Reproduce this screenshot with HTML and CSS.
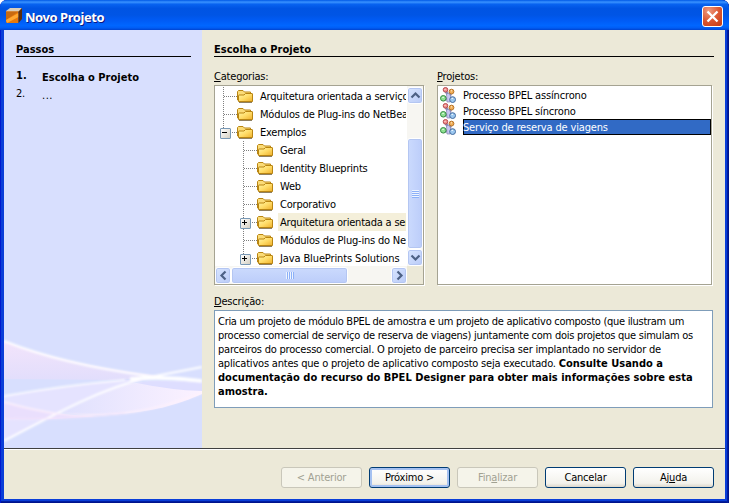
FILE: index.html
```
<!DOCTYPE html>
<html lang="pt-BR">
<head>
<meta charset="utf-8">
<title>Novo Projeto</title>
<link rel="stylesheet" href="styles.css">
</head>
<body>
<svg class="defs" width="0" height="0">
  <defs>
    <linearGradient id="fold" x1="0" y1="0" x2="1" y2="1"><stop offset="0" stop-color="#fff6a8"/><stop offset=".5" stop-color="#ffdc68"/><stop offset="1" stop-color="#eeb02c"/></linearGradient>
    <symbol id="folder" viewBox="0 0 16 16">
      <path d="M.5 12V3.500L1.500 2.500H6L7.500 4h6v8z" fill="#fbdc78" stroke="#b98512"/>
      <path d="M1.500 13.500V7.500q0-.5.5-.5H7L8.500 5.500h6.500q.5 0 .5.5V13.500z" fill="url(#fold)" stroke="#b98512"/>
      <path d="M2 14.500h13" fill="none" stroke="#5f4a20" stroke-opacity=".7"/>
    </symbol>
    <symbol id="process" viewBox="0 0 16 16">
      <path d="M5.500 4L9 9M11 5L8.500 12.500M4 12h8" stroke="#8a8bb5" stroke-width="2.800" fill="none"/>
      <path d="M6.500 7L9 6l2 4-1 5H7z" fill="#c8c6f2" stroke="#8585b0" stroke-width=".7"/>
      <circle cx="5.500" cy="2.800" r="2.300" fill="#f0908c" stroke="#b94a50"/>
      <circle cx="11.500" cy="4.600" r="2.400" fill="#f0ae58" stroke="#b97325"/>
      <circle cx="3.300" cy="11.300" r="2.800" fill="#8fe092" stroke="#368b45"/>
      <circle cx="12.600" cy="12.600" r="2.900" fill="#9cc8f0" stroke="#41699e"/>
      <path d="M4.500 2.500h1M11 3.800h1M2.300 10.500h1.500M11.500 11.500h1.500" stroke="#fff" stroke-opacity=".8"/>
    </symbol>
  </defs>
</svg>
<div class="window">
  <header class="titlebar">
    <svg class="app" width="16" height="16" viewBox="0 0 16 16"><path d="M0 3L4 0h12l-3 4H0z" fill="#d9cdb9"/><path d="M0 3.500h12.500V15H1L0 14z" fill="#e8780a"/><path d="M0 3.500h12.500L0 12z" fill="#c86a10"/><path d="M0 12L12.500 5v4L1 15z" fill="#ffa832"/><path d="M12.500 3.500L16 0v11l-3.500 4z" fill="#5b2c08"/></svg>
    <h1><span>Novo Projeto</span></h1>
    <button class="close" aria-label="Fechar"><svg width="21" height="21" viewBox="0 0 21 21"><path d="M5.500 5.500l10 10M15.500 5.500l-10 10" stroke="#fff" stroke-width="2.300"/></svg></button>
  </header>
  <main>
    <aside>
      <svg class="waves" width="198" height="150" viewBox="4 298 198 150">
        <defs>
          <linearGradient id="w1" x1="0" x2="0" y1="0" y2="1"><stop offset="0" stop-color="#f3e4fb"/><stop offset="1" stop-color="#e2defc"/></linearGradient>
          <linearGradient id="w2"><stop offset="0" stop-color="#dfe0fe"/><stop offset="1" stop-color="#fcf2ff"/></linearGradient>
          <filter id="soft" x="-5%" y="-5%" width="110%" height="110%"><feGaussianBlur stdDeviation=".9"/></filter>
        </defs>
        <path d="M4 341C54 360 105 369 160 376L120 380 4 379z" fill="url(#w1)"/>
        <path d="M4 396C50 388 90 383 125 380L148 379C95 391 50 418 4 441z" fill="#e5e3ff"/>
        <path d="M4 402C35 411 60 415 95 416C70 419 35 420 4 419z" fill="#eadffd"/>
        <path d="M125 384C155 381 180 381 202 381V394C165 410 140 413 100 415Q70 415 60 411C80 400 105 390 125 384z" fill="url(#w2)"/>
        <path d="M137 383Q170 390 202 391V381H150z" fill="#dedeff"/>
        <g fill="none" stroke="#fff" filter="url(#soft)">
          <path d="M4 341C54 361 105 370 150 376Q175 380 202 381" stroke-width="2"/>
          <path d="M4 396C50 388 90 383 125 380" stroke-width="1.500"/>
          <path d="M4 441C50 417 95 391 145 378L202 367" stroke-width="2"/>
          <path d="M4 402C45 413 70 418 115 414C150 411 175 403 202 393" stroke="#fff2fb" stroke-width="1.500"/>
          <path d="M4 419C70 420 105 415 125 413" stroke="#f8e7fb"/>
          <path d="M130 379Q165 376 202 381" stroke-width="3.500"/>
        </g>
      </svg>
      <h2 class="bold">Passos</h2>
      <ol>
        <li class="bold"><span class="num">1.</span><span class="step">Escolha o Projeto</span></li>
        <li><span class="num">2.</span><span class="step dots">...</span></li>
      </ol>
    </aside>
    <section class="content">
      <h2 class="bold">Escolha o Projeto</h2>
      <div class="lists">
        <div class="cat">
          <label><u>C</u>ategorias:</label>
          <div class="box tree">
            <div class="rows">
              <ul>
                <li class="row"><i class="guide"></i><svg class="ic"><use href="#folder"/></svg><span>Arquitetura orientada a serviços</span></li>
                <li class="row"><i class="guide"></i><svg class="ic"><use href="#folder"/></svg><span>Módulos de Plug-ins do NetBeans</span></li>
                <li class="row"><i class="guide end minus"></i><svg class="ic"><use href="#folder"/></svg><span>Exemplos</span></li>
              </ul>
              <ul class="nested">
                <li class="row"><i class="guide"></i><svg class="ic"><use href="#folder"/></svg><span>Geral</span></li>
                <li class="row"><i class="guide"></i><svg class="ic"><use href="#folder"/></svg><span>Identity Blueprints</span></li>
                <li class="row"><i class="guide"></i><svg class="ic"><use href="#folder"/></svg><span>Web</span></li>
                <li class="row"><i class="guide"></i><svg class="ic"><use href="#folder"/></svg><span>Corporativo</span></li>
                <li class="row"><i class="guide plus"></i><svg class="ic"><use href="#folder"/></svg><span class="soft">Arquitetura orientada a serviços</span></li>
                <li class="row"><i class="guide"></i><svg class="ic"><use href="#folder"/></svg><span>Módulos de Plug-ins do NetBeans</span></li>
                <li class="row"><i class="guide end plus"></i><svg class="ic"><use href="#folder"/></svg><span class="wide">Java BluePrints Solutions</span></li>
              </ul>
            </div>
            <div class="vbar">
              <b class="sb arrow"><svg width="15" height="15"><path d="M3.500 9.500l4-4 4 4"/></svg></b>
              <b class="sb vthumb"><i></i></b>
              <b class="sb arrow"><svg width="15" height="15"><path d="M3.500 5.500l4 4 4-4"/></svg></b>
            </div>
            <div class="hbar">
              <b class="sb arrow"><svg width="15" height="15"><path d="M9.500 3.500l-4 4 4 4"/></svg></b>
              <b class="sb hthumb"><i></i></b>
              <b class="sb arrow last"><svg width="15" height="15"><path d="M5.500 3.500l4 4-4 4"/></svg></b>
            </div>
          </div>
        </div>
        <div class="proj">
          <label><u>P</u>rojetos:</label>
          <ul class="box plist">
            <li><svg class="ic"><use href="#process"/></svg><span>Processo BPEL assíncrono</span></li>
            <li><svg class="ic"><use href="#process"/></svg><span>Processo BPEL síncrono</span></li>
            <li class="sel"><svg class="ic"><use href="#process"/></svg><span>Serviço de reserva de viagens</span></li>
          </ul>
        </div>
      </div>
      <label class="dlabel"><u>D</u>escrição:</label>
      <div class="desc">
        <p class="tight">Cria um projeto de módulo BPEL de amostra e um projeto de aplicativo composto (que ilustram um</p>
        <p class="snug">processo comercial de serviço de reserva de viagens) juntamente com dois projetos que simulam os</p>
        <p>parceiros do processo comercial. O projeto de parceiro precisa ser implantado no servidor de</p>
        <p>aplicativos antes que o projeto de aplicativo composto seja executado. <strong>Consulte Usando a</strong></p>
        <p><strong>documentação do recurso do BPEL Designer para obter mais informações sobre esta</strong></p>
        <p><strong>amostra.</strong></p>
      </div>
    </section>
  </main>
  <footer>
    <button class="btn" disabled>&lt; Anterior</button>
    <button class="btn default">Próximo &gt;</button>
    <button class="btn" disabled>Fin<u>a</u>lizar</button>
    <button class="btn">Cancelar</button>
    <button class="btn">Aj<u>u</u>da</button>
  </footer>
</div>
</body>
</html>
```
FILE: styles.css
```
* { box-sizing: border-box; }
body {
  margin: 0;
  background: #fff;
  font: 11px/14px "DejaVu Sans Condensed", "DejaVu Sans", sans-serif;
  letter-spacing: -0.2px;
  color: #000;
  overflow: hidden;
}
h1, h2, p, ul, ol { margin: 0; padding: 0; list-style: none; }
.defs { position: absolute; }
u { text-underline-offset: 1px; text-decoration-thickness: 1px; }
.window {
  width: 729px;
  height: 503px;
  display: flex;
  flex-direction: column;
  padding: 0 4px 4px;
  border-radius: 7px 7px 0 0;
  overflow: hidden;
  background: #0a3ed8;
  box-shadow: inset 1px 0 #0019cf, inset -1px 0 #00138c, inset -2px 0 #001ea0, inset 0 -1px #00138c, inset 0 -2px #001ea0;
}
.titlebar {
  height: 30px;
  flex: none;
  margin: 0 -4px;
  padding: 0 6px;
  display: flex;
  align-items: center;
  background: linear-gradient(#0058e6 0, #3a93ff 7%, #0863f0 14%, #0054e3 28%, #0055e5 50%, #005bf5 68%, #0066ff 85%, #005df5 93%, #0043cf 100%);
}
.app { margin-top: 2px; }
h1 {
  flex: 1;
  margin: 3px 0 0 3px;
  font: bold 13px/16px "Noto Sans", sans-serif;
  letter-spacing: -0.45px;
  color: #fff;
  text-shadow: 1px 1px #0a1883;
}
.close {
  width: 21px;
  height: 21px;
  margin: 3px 0 0;
  padding: 0;
  border: 1px solid #fff;
  border-radius: 3px;
  background: radial-gradient(circle at 30% 20%, #ee9a80, #dc5732 50%, #c53a12);
}
.close svg { display: block; margin: -1px; }
main { display: flex; height: 418px; flex: none; }
aside {
  position: relative;
  width: 198px;
  background: #d8dffe;
  padding: 12px 11px 0 12px;
}
.waves { position: absolute; left: 0; bottom: 0; }
.bold, strong { font-weight: bold; letter-spacing: 0.02px; }
h2 {
  font-size: 11px;
  line-height: 15px;
  height: 15px;
  border-bottom: 1px solid #000;
}
aside ol { margin-top: 12px; }
aside li { display: flex; height: 18px; }
.num { width: 26px; }
.step { padding-top: 2px; }
.dots { letter-spacing: .5px; }
.content { flex: 1; background: #ece9d8; padding: 12px 11px 0 12px; }
.lists { display: flex; gap: 13px; margin-top: 12px; }
label { display: block; height: 16px; padding-top: 1px; }
.box { height: 200px; border: 1px solid #a5a392; background: #fff; box-shadow: 1px 1px #fff; }
.cat { width: 210px; }
.tree { display: grid; grid-template: 180px 18px / 192px 16px; }
.rows { overflow: hidden; padding-top: 1px; width: 191px; }
.nested { padding-left: 20px; }
.row { display: flex; height: 18px; align-items: center; white-space: nowrap; }
.ic { width: 16px; height: 16px; flex: none; }
.row .ic { margin-top: -1px; }
.row span { margin-left: 5px; padding: 3px 2px 1px; line-height: 14px; height: 18px; }
.row .soft { background: #f4efda; }
.row .wide { letter-spacing: -0.12px; }
.guide {
  position: relative;
  width: 22px;
  height: 18px;
  flex: none;
  background:
    repeating-linear-gradient(90deg, #808080 0 1px, #fff 1px 2px) 9px 9px / 13px 1px no-repeat,
    repeating-linear-gradient(#808080 0 1px, #fff 1px 2px) 8px 0 / 1px 18px no-repeat;
}
.guide.end { background-size: 13px 1px, 1px 10px; }
.plus::before, .minus::before {
  content: "";
  position: absolute;
  left: 5px;
  top: 5px;
  width: 9px;
  height: 9px;
  border: 1px solid #7898b5;
  border-radius: 1px;
  background:
    linear-gradient(#000, #000) 1px 3px / 5px 1px no-repeat,
    linear-gradient(135deg, #fff, #d5d0c3);
}
.plus::before {
  background:
    linear-gradient(#000, #000) 1px 3px / 5px 1px no-repeat,
    linear-gradient(#000, #000) 3px 1px / 1px 5px no-repeat,
    linear-gradient(135deg, #fff, #d5d0c3);
}
.vbar { display: flex; flex-direction: column; background: #f7f6f2; padding: 1px 0 0; justify-content: space-between; }
.hbar { display: flex; width: 192px; background: #f7f6f2; padding-top: 1px; grid-row: 2; }
.tree::after { content: ""; background: #ece9d8; }
.sb {
  display: flex;
  align-items: center;
  justify-content: center;
  border: 1px solid #fff;
  border-radius: 3px;
  background: linear-gradient(135deg, #d8e5ff, #bacbf7);
  box-shadow: inset 0 0 0 1px #b4c6f2;
  width: 16px;
}
.arrow { height: 17px; flex: none; }
.arrow path { fill: none; stroke: #4d6185; stroke-width: 2.2; }
.vthumb { height: 111px; margin: auto 0 0; background: linear-gradient(90deg, #cbdafd, #bccdfa); }
.vthumb i { width: 7px; height: 8px; background: repeating-linear-gradient(#eef4fe 0 1px, #8cb0f8 1px 2px); }
.hthumb { width: 117px; height: 17px; background: linear-gradient(#cbdafd, #bccdfa); }
.hthumb i { height: 7px; width: 8px; background: repeating-linear-gradient(90deg, #eef4fe 0 1px, #8cb0f8 1px 2px); }
.last { margin-left: auto; }
.proj { width: 275px; }
.plist { padding: 1px 0; }
.plist li { display: flex; height: 16px; padding-left: 2px; }
.plist span { margin-left: 7px; flex: 1; line-height: 16px; padding-top: 1px; letter-spacing: -0.16px; }
.plist .sel span { background: #316ac5; color: #fff; box-shadow: inset 0 0 0 1px #000; line-height: 15px; }
.dlabel { margin-top: 9px; }
.desc { width: 499px; height: 98px; border: 1px solid #7f9db9; background: #fff; padding: 4px 3px 2px; white-space: nowrap; }
.tight { letter-spacing: -0.285px; }
.snug { letter-spacing: -0.25px; }
footer {
  height: 51px;
  border-top: 1px solid #404040;
  box-shadow: inset 0 1px #fff;
  background: #ece9d8;
  display: flex;
  justify-content: flex-end;
  gap: 7px;
  padding: 18px 11px 0 0;
}
.btn {
  width: 81px;
  height: 21px;
  padding: 0;
  border: 1px solid #003c74;
  border-radius: 3px;
  font: inherit;
  letter-spacing: inherit;
  line-height: 18px;
  color: #000;
  background: linear-gradient(#fff, #f3f2ec 80%, #dcd7cb);
}
.btn.default { box-shadow: inset 0 0 0 2px #a5c1f1; }
.btn:disabled { border-color: #c9c7ba; background: #f5f4ea; color: #a1a192; }
```
